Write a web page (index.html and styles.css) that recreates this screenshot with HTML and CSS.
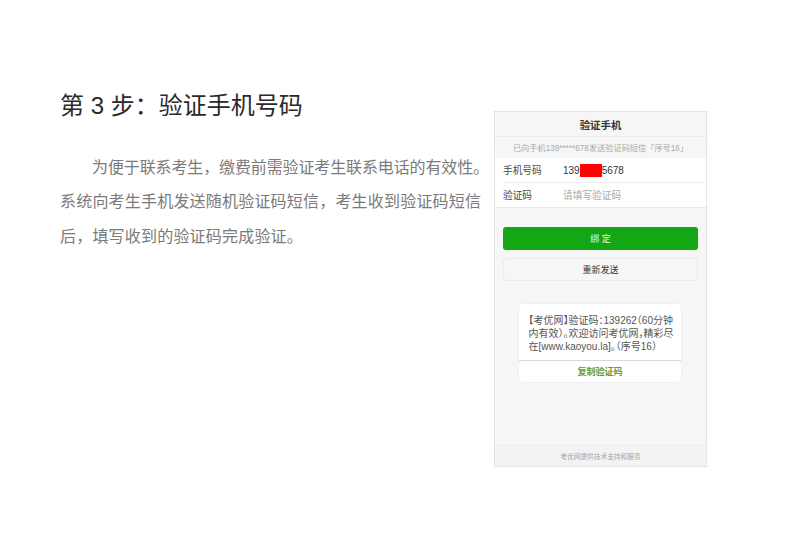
FILE: index.html
```html
<!DOCTYPE html>
<html lang="zh">
<head>
<meta charset="utf-8">
<title>验证手机号码</title>
<link rel="stylesheet" href="styles.css">
</head>
<body>
<main class="slide">
  <section class="copy">
    <h1 class="title">第 3 步：验证手机号码</h1>
    <p class="para">
      <span class="line line-first">为便于联系考生，缴费前需验证考生联系电话的有效性。</span>
      <span class="line line-wide">系统向考生手机发送随机验证码短信，考生收到验证码短信</span>
      <span class="line line-wide">后，填写收到的验证码完成验证。</span>
    </p>
  </section>
  <section class="phone">
    <header class="phone-head">验证手机</header>
    <p class="notice">已向手机139*****678发送验证码短信「序号16」</p>
    <div class="form">
      <div class="row row-line"><span class="label">手机号码</span><span class="value">139<span class="mask"></span>5678</span></div>
      <div class="row row-last"><span class="label">验证码</span><span class="placeholder">请填写验证码</span></div>
    </div>
    <div class="actions">
      <button class="btn btn-primary">绑 定</button>
      <button class="btn btn-plain">重新发送</button>
    </div>
    <div class="sms">
      <p class="sms-text">【考优网】验证码：139262（60分钟内有效）。欢迎访问考优网，精彩尽在[www.kaoyou.la]。（序号16）</p>
      <div class="sms-copy">复制验证码</div>
    </div>
    <footer class="phone-foot">考优网提供技术支持和服务</footer>
  </section>
</main>
</body>
</html>
```
FILE: styles.css
```css
* { box-sizing: border-box; }
html, body { margin: 0; padding: 0; background: #fff; }
body {
  width: 793px;
  height: 559px;
  overflow: hidden;
  font-family: "Liberation Sans", "Noto Sans CJK SC", sans-serif;
}
.slide {
  display: flex;
  align-items: flex-start;
  padding: 111px 0 0 60px;
}
.copy { width: 434px; flex: none; }
.title {
  margin: -21px 0 0;
  font-size: 24px;
  line-height: 32px;
  font-weight: 400;
  color: #2a2a2a;
}
.para {
  margin: 28.5px 0 0;
  font-size: 16px;
  line-height: 34.5px;
  color: #7a7a7a;
}
.line { display: block; white-space: nowrap; }
.line-first { padding-left: 32px; letter-spacing: -.12px; }
.line-wide { letter-spacing: .2px; }
.phone {
  width: 213px;
  height: 356px;
  display: flex;
  flex-direction: column;
  background: #f6f6f6;
  border: 1px solid #e4e4e4;
}
.phone-head {
  height: 25px;
  line-height: 27px;
  text-align: center;
  font-size: 10.4px;
  font-weight: 700;
  color: #333;
  border-bottom: 1px solid #e8e8e8;
}
.notice {
  margin: 0;
  height: 21px;
  line-height: 24px;
  text-align: center;
  font-size: 8.2px;
  color: #aaa;
}
.form { background: #fff; padding-left: 8px; border-bottom: 1px solid #e8e8e8; }
.row {
  display: flex;
  align-items: center;
  height: 25px;
  font-size: 9.7px;
}
.row-last { height: 24px; }
.row-line { border-bottom: 1px solid #eee; }
.label { width: 60px; color: #4a4a4a; }
.value { color: #333; display: flex; align-items: center; font-size: 10px; }
.mask { display: inline-block; width: 22px; height: 13px; background: #f00; }
.placeholder { color: #aaa; }
.actions {
  display: flex;
  flex-direction: column;
  gap: 8.5px;
  padding: 19px 8px 0 8px;
}
.btn {
  height: 22.5px;
  padding: 0;
  border-radius: 3px;
  font-family: inherit;
  font-size: 9px;
}
.btn-primary { background: #14a714; border: 0; color: #e8f5e8; }
.btn-plain { background: #f6f6f6; border: 1px solid #ebebeb; color: #333; }
.sms {
  width: 164px;
  margin: 22.5px 0 0 23px;
  background: #fff;
  border-radius: 5px;
  border: 1px solid #f0f0f0;
}
.sms-text {
  margin: 0;
  height: 57px;
  padding: 9.5px 4.5px 0 9.5px;
  font-size: 10px;
  line-height: 13px;
  color: #555;
  font-feature-settings: "halt";
  border-bottom: 1px solid #d8d8d8;
}
.sms-copy {
  height: 21px;
  line-height: 22px;
  text-align: center;
  font-size: 9px;
  font-weight: 700;
  color: #5a9e48;
}
.phone-foot {
  margin-top: auto;
  height: 21px;
  line-height: 21px;
  text-align: center;
  font-size: 6.7px;
  color: #a5a5a5;
  background: #f3f3f3;
  border-top: 1px solid #ededed;
}
```
